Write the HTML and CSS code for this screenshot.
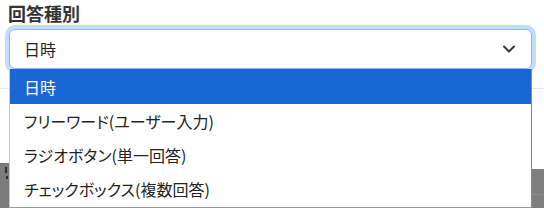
FILE: index.html
```html
<!DOCTYPE html>
<html lang="ja">
<head>
    <meta charset="UTF-8">
    <meta name="viewport" content="width=device-width, initial-scale=1.0">
    <title>回答種別</title>
    <link rel="stylesheet" href="styles.css">
</head>
<body>
    <div class="field">
        <label class="field-label" for="answer-type">回答種別</label>
        <div class="select-box" id="answer-type">
            <span class="select-value">日時</span>
            <svg class="chevron" width="12" height="8" viewBox="0 0 12 8">
                <path d="M1 1.5 L6 6.5 L11 1.5" fill="none" stroke="#343a40" stroke-width="2" stroke-linecap="round" stroke-linejoin="round"/>
            </svg>
        </div>
    </div>
    <div class="divider"></div>
    <div class="backdrop-row">
        <div class="shade shade-left"><span class="mark"></span><span class="mark mark-low"></span></div>
        <div class="shade shade-right"></div>
    </div>

    <ul class="dropdown">
        <li class="option selected">日時</li>
        <li class="option">フリーワード(ユーザー入力)</li>
        <li class="option">ラジオボタン(単一回答)</li>
        <li class="option">チェックボックス(複数回答)</li>
    </ul>
</body>
</html>
```

FILE: styles.css
```css
body {
    margin: 0;
    padding: 0;
    background-color: #fff;
    font-family: "Noto Sans CJK JP", "Noto Sans", sans-serif;
    color: #212529;
    position: relative;
    height: 208px;
    overflow: hidden;
}
.field {
    margin-left: 9px;
    width: 523px;
}
.field-label {
    display: block;
    margin-top: 2px;
    margin-bottom: 5px;
    margin-left: -1px;
    font-size: 18px;
    line-height: 22px;
    font-weight: bold;
    color: #333;
}
.select-box {
    box-sizing: border-box;
    height: 40px;
    display: flex;
    align-items: center;
    justify-content: space-between;
    padding: 0 16px 0 14px;
    border: 1px solid #86b7fe;
    border-radius: 6px;
    box-shadow: 0 0 0 4px rgba(13, 110, 253, 0.25);
    font-size: 16px;
}
.divider {
    margin-top: 19px;
    border-top: 1px solid #e6e6e6;
}
.backdrop-row {
    display: flex;
    justify-content: space-between;
    align-items: flex-end;
    height: 119px;
}
.shade {
    background-color: #7b7b7b;
}
.shade-left {
    width: 9px;
    height: 45px;
    position: relative;
}
.shade-right {
    width: 12px;
    height: 39px;
    border-top: 25px solid #7f7f7f;
    box-sizing: border-box;
    background: linear-gradient(#8c8c8c 0 1px, #7f7f7f 1px);
}
.mark {
    position: absolute;
    left: 5px;
    top: 4px;
    width: 2px;
    height: 6px;
    background-color: #2b2b3a;
}
.mark-low {
    top: 13px;
    left: 6px;
    height: 3px;
}
.dropdown {
    position: absolute;
    top: 69px;
    left: 9px;
    width: 523px;
    height: 139px;
    box-sizing: border-box;
    margin: 0;
    padding: 0;
    list-style: none;
    background-color: #fff;
    border-left: 1px solid #c8c8c8;
    border-right: 1px solid #8a8a8a;
    border-bottom: 1px solid #9a9a9a;
    font-size: 16px;
    font-feature-settings: "palt";
    color: #222;
}
.option {
    height: 34px;
    line-height: 34px;
    padding-left: 14px;
}
.option.selected {
    height: 35px;
    line-height: 37px;
    background-color: #1967d2;
    color: #fff;
}
```
